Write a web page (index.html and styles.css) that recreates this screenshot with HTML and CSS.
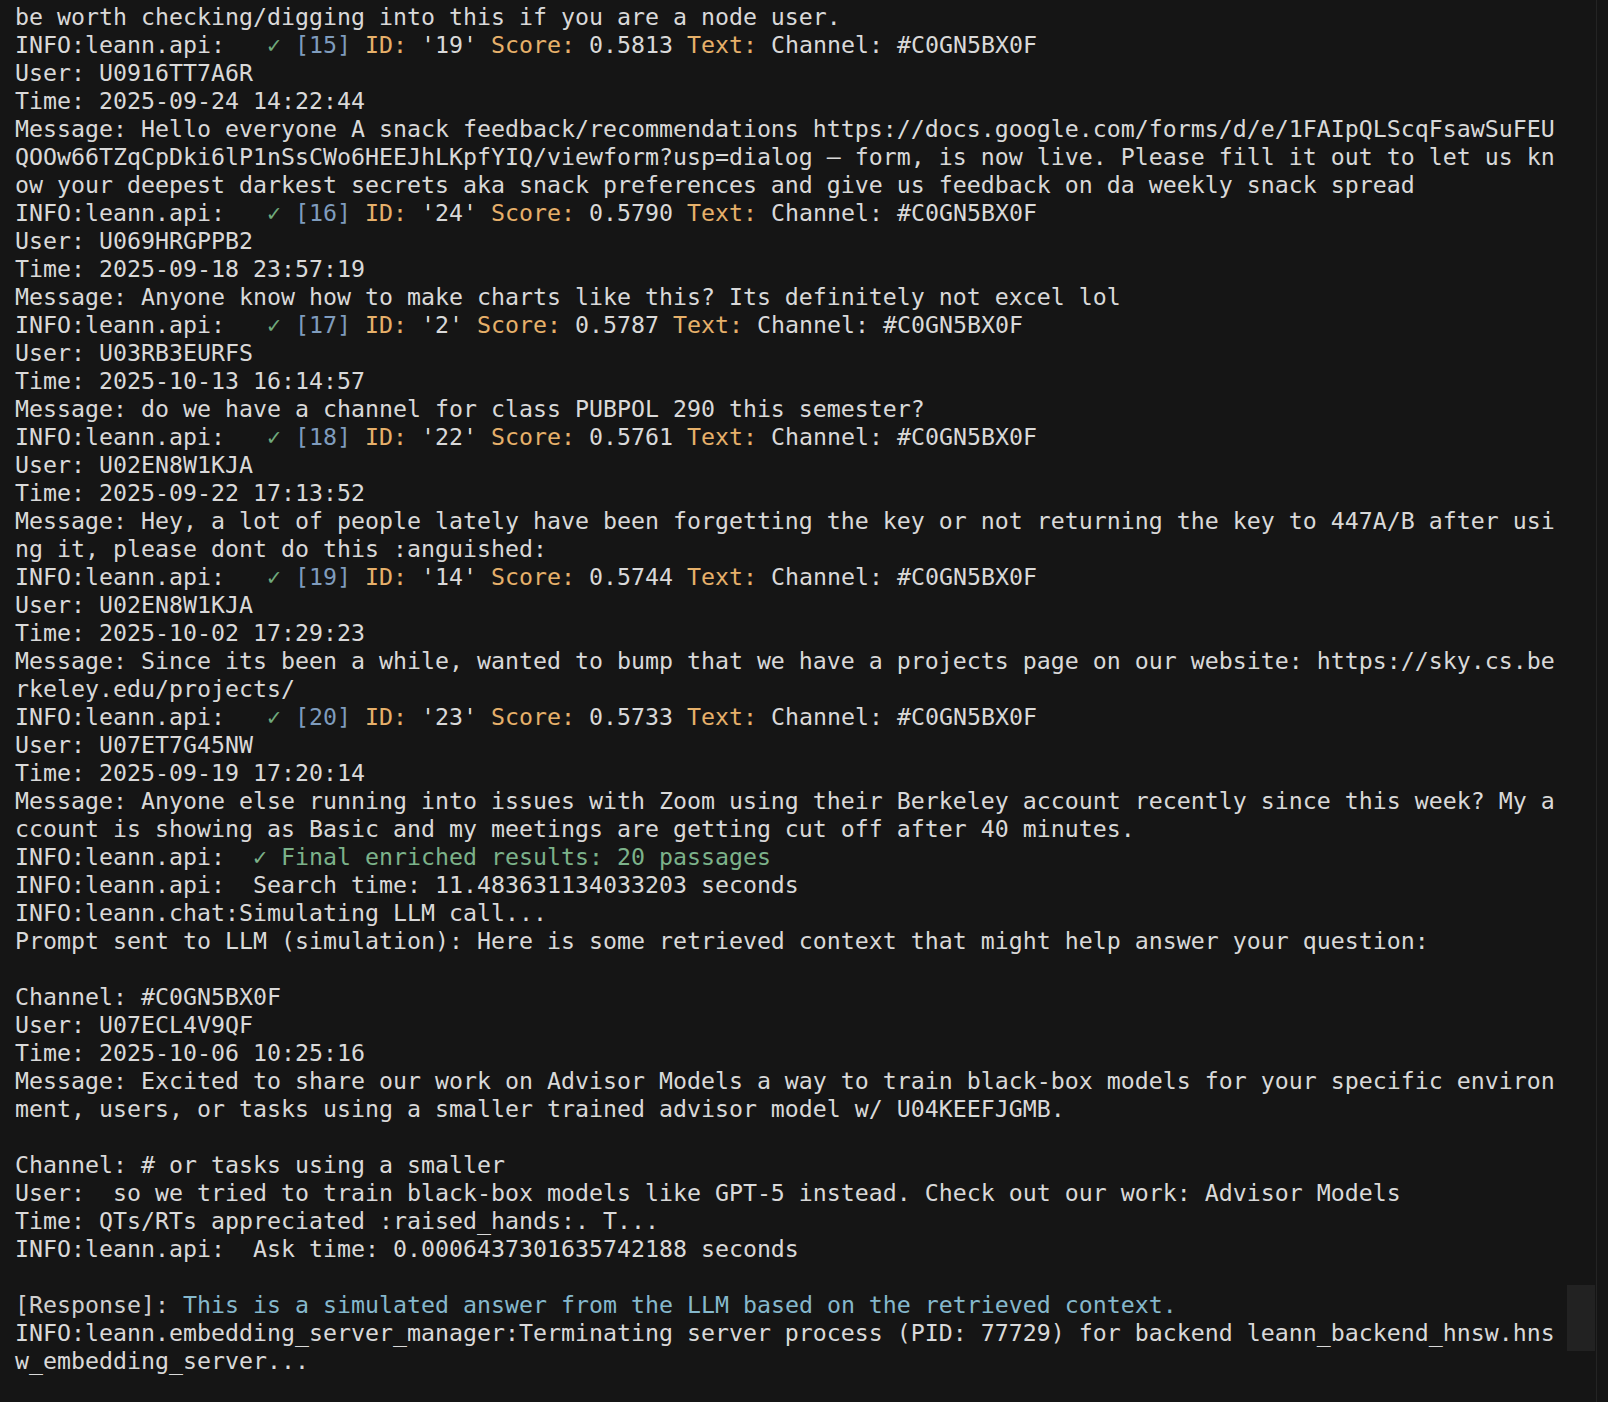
FILE: index.html
```html
<!DOCTYPE html>
<html>
<head>
<meta charset="utf-8">
<link rel="stylesheet" href="styles.css">
</head>
<body>
<div class="screen">
<div class="term">
<div class="ln">be worth checking/digging into this if you are a node user.</div>
<div class="ln">INFO:leann.api:   <span class="ok">✓</span> <span class="idx">[15]</span> <span class="key">ID:</span> '19' <span class="key">Score:</span> 0.5813 <span class="key">Text:</span> Channel: #C0GN5BX0F</div>
<div class="ln">User: U0916TT7A6R</div>
<div class="ln">Time: 2025-09-24 14:22:44</div>
<div class="ln">Message: Hello everyone A snack feedback/recommendations https://docs.google.com/forms/d/e/1FAIpQLScqFsawSuFEU</div>
<div class="ln">QOOw66TZqCpDki6lP1nSsCWo6HEEJhLKpfYIQ/viewform?usp=dialog – form, is now live. Please fill it out to let us kn</div>
<div class="ln">ow your deepest darkest secrets aka snack preferences and give us feedback on da weekly snack spread</div>
<div class="ln">INFO:leann.api:   <span class="ok">✓</span> <span class="idx">[16]</span> <span class="key">ID:</span> '24' <span class="key">Score:</span> 0.5790 <span class="key">Text:</span> Channel: #C0GN5BX0F</div>
<div class="ln">User: U069HRGPPB2</div>
<div class="ln">Time: 2025-09-18 23:57:19</div>
<div class="ln">Message: Anyone know how to make charts like this? Its definitely not excel lol</div>
<div class="ln">INFO:leann.api:   <span class="ok">✓</span> <span class="idx">[17]</span> <span class="key">ID:</span> '2' <span class="key">Score:</span> 0.5787 <span class="key">Text:</span> Channel: #C0GN5BX0F</div>
<div class="ln">User: U03RB3EURFS</div>
<div class="ln">Time: 2025-10-13 16:14:57</div>
<div class="ln">Message: do we have a channel for class PUBPOL 290 this semester?</div>
<div class="ln">INFO:leann.api:   <span class="ok">✓</span> <span class="idx">[18]</span> <span class="key">ID:</span> '22' <span class="key">Score:</span> 0.5761 <span class="key">Text:</span> Channel: #C0GN5BX0F</div>
<div class="ln">User: U02EN8W1KJA</div>
<div class="ln">Time: 2025-09-22 17:13:52</div>
<div class="ln">Message: Hey, a lot of people lately have been forgetting the key or not returning the key to 447A/B after usi</div>
<div class="ln">ng it, please dont do this :anguished:</div>
<div class="ln">INFO:leann.api:   <span class="ok">✓</span> <span class="idx">[19]</span> <span class="key">ID:</span> '14' <span class="key">Score:</span> 0.5744 <span class="key">Text:</span> Channel: #C0GN5BX0F</div>
<div class="ln">User: U02EN8W1KJA</div>
<div class="ln">Time: 2025-10-02 17:29:23</div>
<div class="ln">Message: Since its been a while, wanted to bump that we have a projects page on our website: https://sky.cs.be</div>
<div class="ln">rkeley.edu/projects/</div>
<div class="ln">INFO:leann.api:   <span class="ok">✓</span> <span class="idx">[20]</span> <span class="key">ID:</span> '23' <span class="key">Score:</span> 0.5733 <span class="key">Text:</span> Channel: #C0GN5BX0F</div>
<div class="ln">User: U07ET7G45NW</div>
<div class="ln">Time: 2025-09-19 17:20:14</div>
<div class="ln">Message: Anyone else running into issues with Zoom using their Berkeley account recently since this week? My a</div>
<div class="ln">ccount is showing as Basic and my meetings are getting cut off after 40 minutes.</div>
<div class="ln">INFO:leann.api:  <span class="final">✓ Final enriched results: 20 passages</span></div>
<div class="ln">INFO:leann.api:  Search time: 11.483631134033203 seconds</div>
<div class="ln">INFO:leann.chat:Simulating LLM call...</div>
<div class="ln">Prompt sent to LLM (simulation): Here is some retrieved context that might help answer your question:</div>
<div class="ln"> </div>
<div class="ln">Channel: #C0GN5BX0F</div>
<div class="ln">User: U07ECL4V9QF</div>
<div class="ln">Time: 2025-10-06 10:25:16</div>
<div class="ln">Message: Excited to share our work on Advisor Models a way to train black-box models for your specific environ</div>
<div class="ln">ment, users, or tasks using a smaller trained advisor model w/ U04KEEFJGMB.</div>
<div class="ln"> </div>
<div class="ln">Channel: # or tasks using a smaller</div>
<div class="ln">User:  so we tried to train black-box models like GPT-5 instead. Check out our work: Advisor Models</div>
<div class="ln">Time: QTs/RTs appreciated :raised_hands:. T...</div>
<div class="ln">INFO:leann.api:  Ask time: 0.0006437301635742188 seconds</div>
<div class="ln"> </div>
<div class="ln"><span class="resp">[Response]:</span> <span class="answer">This is a simulated answer from the LLM based on the retrieved context.</span></div>
<div class="ln">INFO:leann.embedding_server_manager:Terminating server process (PID: 77729) for backend leann_backend_hnsw.hns</div>
<div class="ln">w_embedding_server...</div>
</div>
<div class="track"></div>
<div class="thumb"></div>
</div>
</body>
</html>
```
FILE: styles.css
```css
html, body {
  margin: 0;
  padding: 0;
  background: #151515;
}

.screen {
  position: relative;
  width: 1608px;
  height: 1402px;
  overflow: hidden;
  background: #151515;
}

.term {
  padding: 3px 0 0 15px;
  font-family: "DejaVu Sans Mono", "Liberation Mono", monospace;
  font-size: 23.25px;
  line-height: 28px;
  color: #d9d9d9;
}

.ln {
  white-space: pre;
  height: 28px;
}

.ok {
  color: #6fa97b;
}

.idx {
  color: #7f9cbd;
}

.key {
  color: #e6b06a;
}

.final {
  color: #7cb28a;
}

.resp {
  color: #cfcfcf;
}

.answer {
  color: #85b8cc;
}

.track {
  position: absolute;
  top: 0;
  bottom: 0;
  right: 0;
  width: 11px;
  border-left: 1px solid #242424;
}

.thumb {
  position: absolute;
  top: 1285px;
  left: 1567px;
  width: 28px;
  height: 66px;
  background: #222222;
}
```
